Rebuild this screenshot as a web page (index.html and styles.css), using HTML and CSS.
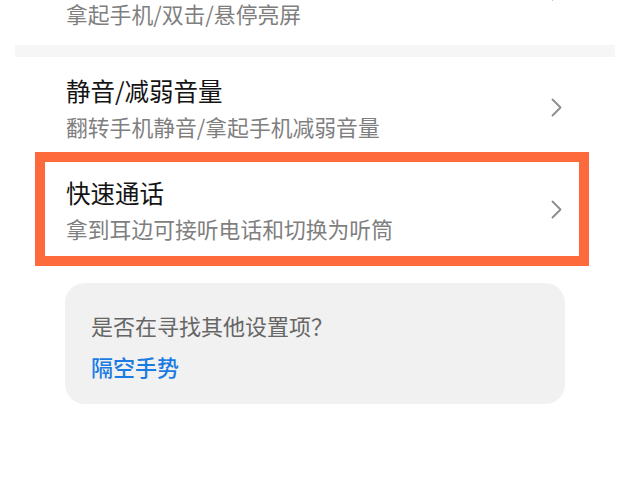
FILE: index.html
```html
<!DOCTYPE html>
<html>
  <head>
    <title>手势控制</title>
    <link rel="stylesheet" href="styles.css">
  </head>
  <body>
    <div class="list">
      <!-- Row scrolled partly out of view, only its subtitle shows -->
      <div class="row row-top">
        <div class="row-text">
          <div class="row-sub">拿起手机/双击/悬停亮屏</div>
        </div>
        <svg class="chevron" width="11" height="19" viewBox="0 0 11 19"><path d="M1.5 1.5 L9.5 9.5 L1.5 17.5"/></svg>
      </div>

      <div class="divider"></div>

      <div class="row">
        <div class="row-text">
          <div class="row-title">静音/减弱音量</div>
          <div class="row-sub">翻转手机静音/拿起手机减弱音量</div>
        </div>
        <svg class="chevron" width="11" height="19" viewBox="0 0 11 19"><path d="M1.5 1.5 L9.5 9.5 L1.5 17.5"/></svg>
      </div>

      <div class="row row-marked">
        <div class="row-text">
          <div class="row-title">快速通话</div>
          <div class="row-sub">拿到耳边可接听电话和切换为听筒</div>
        </div>
        <svg class="chevron" width="11" height="19" viewBox="0 0 11 19"><path d="M1.5 1.5 L9.5 9.5 L1.5 17.5"/></svg>
      </div>

      <div class="hint">
        <div class="hint-text">是否在寻找其他设置项？</div>
        <a class="hint-link" href="#">隔空手势</a>
      </div>
    </div>
  </body>
</html>
```

FILE: styles.css
```css
/* Global styles */
body {
  margin: 0;
  padding: 0;
  background-color: #ffffff;
  font-family: "Noto Sans CJK SC", "Noto Sans", sans-serif;
  overflow: hidden;
}

/* List styles */
.list {
  padding: 0 10px 0 15px;
}

.row {
  display: flex;
  align-items: center;
  padding: 16px 53px 7px 51px;
}

/* scrolled row: subtitle line sits just under the top edge */
.row-top {
  margin-top: -4px;
  padding-top: 0;
  padding-bottom: 13px;
}

.row-top .chevron {
  margin-top: -46px;
}

.row-text {
  flex: 1;
}

.row-title {
  color: #141414;
  font-size: 24.5px;
  line-height: 36px;
}

.row-sub {
  color: #7f7f7f;
  font-size: 21.8px;
  line-height: 36px;
}

.chevron {
  flex-shrink: 0;
  margin-top: -4px;
}

.chevron path {
  fill: none;
  stroke: #8c8c8c;
  stroke-width: 1.8;
  stroke-linecap: round;
  stroke-linejoin: round;
}

.divider {
  height: 12px;
  background-color: #f6f6f6;
}

/* Highlighted row */
.row-marked {
  border: 10px solid #fe6a3c;
  margin: 0 26px 0 20px;
  padding: 13px 17px 9px 21px;
}

/* Hint card */
.hint {
  background-color: #f1f1f1;
  border-radius: 20px;
  margin: 17px 50px 0 50px;
  padding: 25px 26px 21px 26px;
}

.hint-text {
  color: #666666;
  font-size: 22px;
  line-height: 34px;
}

.hint-link {
  display: block;
  margin-top: 7px;
  color: #1a7be2;
  font-size: 22px;
  font-weight: 500;
  line-height: 34px;
  text-decoration: none;
}
```
